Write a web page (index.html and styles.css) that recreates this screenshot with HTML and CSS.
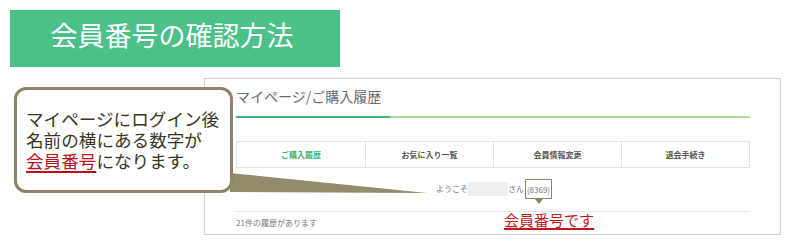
FILE: index.html
```html
<!DOCTYPE html>
<html lang="ja">
<head>
    <meta charset="UTF-8">
    <meta name="viewport" content="width=device-width, initial-scale=1.0">
    <title>会員番号の確認方法</title>
    <link rel="stylesheet" href="styles.css">
</head>
<body>
    <div class="guide">
        <h1 class="guide-title">会員番号の確認方法</h1>

        <div class="shot">
            <div class="page-title">マイページ/ご購入履歴</div>
            <ul class="tabs">
                <li class="tab active">ご購入履歴</li>
                <li class="tab">お気に入り一覧</li>
                <li class="tab">会員情報変更</li>
                <li class="tab">退会手続き</li>
            </ul>
            <div class="welcome">
                <span>ようこそ</span>
                <span class="name-mask"></span>
                <span>さん</span>
                <span class="member-no">(8369)</span>
            </div>
            <div class="history-count">21件の履歴があります</div>
        </div>

        <!-- 吹き出し -->
        <svg class="bubble-tail" width="200" height="24" viewBox="0 0 200 24">
            <polygon points="0,0 197,20 0,19" fill="#948a6c"/>
        </svg>
        <div class="bubble">
            <div class="bubble-line">マイページにログイン後</div>
            <div class="bubble-line">名前の横にある数字が</div>
            <div class="bubble-line"><span class="mark">会員番号</span>になります。</div>
        </div>

        <div class="member-label">会員番号です</div>
    </div>
</body>
</html>
```

FILE: styles.css
```css
body {
    margin: 0;
    background: #fff;
    font-family: "Noto Sans CJK JP", "Noto Sans", sans-serif;
}
.guide {
    position: relative;
    width: 790px;
    height: 250px;
    padding-top: 10px;
    box-sizing: border-box;
}
.guide-title {
    margin: 0 0 0 10px;
    width: 330px;
    height: 57px;
    background-color: #4bc189;
    color: #fff;
    font-size: 27px;
    font-weight: normal;
    line-height: 50px;
    text-align: center;
    padding-right: 6px;
    box-sizing: border-box;
}
.shot {
    margin: 11px 0 0 204px;
    width: 577px;
    height: 157px;
    border: 1px solid #cfcfcf;
    box-sizing: border-box;
    padding: 6px 30px 0 31px;
    color: #777;
}
.page-title {
    position: relative;
    font-size: 14px;
    height: 31px;
    line-height: 22px;
    border-bottom: 2px solid #a9de9c;
    color: #6a6a6a;
}
.page-title::after {
    content: "";
    position: absolute;
    left: 0;
    bottom: -2px;
    width: 154px;
    height: 2px;
    background: #3fb77c;
}
.tabs {
    display: grid;
    grid-template-columns: repeat(4, 1fr);
    list-style: none;
    margin: 23px 0 0;
    padding: 0;
    height: 27px;
    border: 1px solid #e3e3e3;
    box-sizing: border-box;
}
.tab {
    display: flex;
    align-items: center;
    justify-content: center;
    border-left: 1px solid #e3e3e3;
    font-size: 8px;
    font-weight: bold;
    color: #555;
}
.tab:first-child {
    border-left: none;
}
.tab.active {
    color: #3cb56c;
}
.welcome {
    display: flex;
    justify-content: center;
    align-items: center;
    margin-top: 10px;
    height: 21px;
    font-size: 8px;
    color: #777;
    padding-left: 2px;
}
.name-mask {
    width: 40px;
    height: 14px;
    background: #eeeeee;
}
.member-no {
    position: relative;
    height: 20px;
    line-height: 19px;
    margin-left: 1px;
    padding: 0 1px;
    border: 1.5px solid #8f8468;
    box-sizing: border-box;
}
.member-no::after {
    content: "";
    position: absolute;
    left: 9px;
    top: 19px;
    border-left: 4px solid transparent;
    border-right: 4px solid transparent;
    border-top: 5px solid #8f8468;
}
.history-count {
    margin-top: 12px;
    border-top: 1px solid #e8e8e8;
    padding-top: 5px;
    font-size: 8px;
    color: #777;
}
.bubble-tail {
    position: absolute;
    left: 230px;
    top: 173px;
}
.bubble {
    position: absolute;
    left: 14px;
    top: 87px;
    width: 219px;
    height: 106px;
    border: 3px solid #8f8468;
    border-radius: 12px;
    background: #fff;
    box-sizing: border-box;
    padding: 18px 0 0 9px;
    font-size: 17.6px;
    color: #3a3524;
    white-space: nowrap;
}
.bubble-line {
    height: 21px;
    line-height: 21px;
}
.mark {
    color: #b5121b;
    text-decoration: underline;
    text-decoration-thickness: 1.5px;
    text-underline-offset: 3px;
}
.member-label {
    position: absolute;
    left: 504px;
    top: 210px;
    font-size: 15px;
    line-height: 20px;
    color: #c3161c;
    text-decoration: underline;
    text-decoration-thickness: 1.5px;
    text-underline-offset: 2px;
}
```
